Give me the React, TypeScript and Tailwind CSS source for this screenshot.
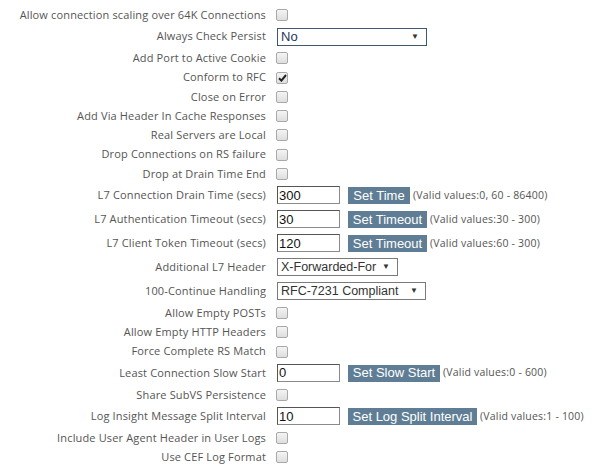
import React from 'react';

type Row =
  | { kind: 'check'; label: string; checked?: boolean }
  | { kind: 'select'; label: string; value: string; width: string; dark?: boolean }
  | { kind: 'input'; label: string; value: string; button: string; btnW: string; hint: string };

const rows: Row[] = [
  { kind: 'check', label: 'Allow connection scaling over 64K Connections' },
  { kind: 'select', label: 'Always Check Persist', value: 'No', width: 'w-[150px]', dark: true },
  { kind: 'check', label: 'Add Port to Active Cookie' },
  { kind: 'check', label: 'Conform to RFC', checked: true },
  { kind: 'check', label: 'Close on Error' },
  { kind: 'check', label: 'Add Via Header In Cache Responses' },
  { kind: 'check', label: 'Real Servers are Local' },
  { kind: 'check', label: 'Drop Connections on RS failure' },
  { kind: 'check', label: 'Drop at Drain Time End' },
  { kind: 'input', label: 'L7 Connection Drain Time (secs)', value: '300', button: 'Set Time', btnW: 'w-[62px]', hint: '(Valid values:0, 60 - 86400)' },
  { kind: 'input', label: 'L7 Authentication Timeout (secs)', value: '30', button: 'Set Timeout', btnW: 'w-[79px]', hint: '(Valid values:30 - 300)' },
  { kind: 'input', label: 'L7 Client Token Timeout (secs)', value: '120', button: 'Set Timeout', btnW: 'w-[79px]', hint: '(Valid values:60 - 300)' },
  { kind: 'select', label: 'Additional L7 Header', value: 'X-Forwarded-For', width: 'w-[121px]' },
  { kind: 'select', label: '100-Continue Handling', value: 'RFC-7231 Compliant', width: 'w-[149px]' },
  { kind: 'check', label: 'Allow Empty POSTs' },
  { kind: 'check', label: 'Allow Empty HTTP Headers' },
  { kind: 'check', label: 'Force Complete RS Match' },
  { kind: 'input', label: 'Least Connection Slow Start', value: '0', button: 'Set Slow Start', btnW: 'w-[92px]', hint: '(Valid values:0 - 600)' },
  { kind: 'check', label: 'Share SubVS Persistence' },
  { kind: 'input', label: 'Log Insight Message Split Interval', value: '10', button: 'Set Log Split Interval', btnW: 'w-[129px]', hint: '(Valid values:1 - 100)' },
  { kind: 'check', label: 'Include User Agent Header in User Logs' },
  { kind: 'check', label: 'Use CEF Log Format' },
];

const Checkbox = ({ checked }: { checked?: boolean }) => (
  <div className="ml-[10px] flex h-[12px] w-[12px] items-center justify-center rounded-[2px] border border-[#a9a9a9] bg-gradient-to-b from-[#f4f4f4] to-[#dedede]">
    {checked && (
      <svg width="9" height="8" viewBox="0 0 9 8">
        <path d="M1 4.2 L3.4 6.6 L8 1" fill="none" stroke="#222" strokeWidth="2" />
      </svg>
    )}
  </div>
);

const Select = ({ value, width, dark }: { value: string; width: string; dark?: boolean }) => (
  <div
    className={`ml-[11px] flex h-[18px] items-center justify-between border pl-[3px] pr-[7px] font-['Liberation_Sans',Arial,sans-serif] text-[12.5px] tracking-normal ${width} ${
      dark ? 'border-[#3f5872] text-[#1d3a5a] text-[13px]' : 'border-[#7a7a7a] text-[#333]'
    }`}
  >
    <span>{value}</span>
    <span className="text-[8px] text-[#333]">▼</span>
  </div>
);

export default function App() {
  return (
    <div className="w-[611px] h-[472px] bg-white pt-[5.375px] font-['Open_Sans',sans-serif] text-[11px] tracking-[0.15px] text-[#555]">
      {rows.map((r, i) => (
        <div key={i} className={`flex items-center ${r.kind === 'check' ? 'h-[19.25px]' : 'h-[24px]'}`}>
          <div className="w-[266px] shrink-0 text-right whitespace-nowrap">{r.label}</div>
          {r.kind === 'check' && <Checkbox checked={r.checked} />}
          {r.kind === 'select' && <Select value={r.value} width={r.width} dark={r.dark} />}
          {r.kind === 'input' && (
            <>
              <div className="ml-[11px] flex h-[18px] w-[63px] items-center border border-[#8a8a8a] border-t-[#555] border-l-[#555] pl-[1px] font-['Liberation_Sans',Arial,sans-serif] text-[13px] tracking-normal text-[#111]">
                {r.value}
              </div>
              <div
                className={`ml-[8px] flex h-[17px] items-center justify-center bg-[#5f7e95] font-['Liberation_Sans',Arial,sans-serif] text-[13px] tracking-normal text-white ${r.btnW}`}
              >
                {r.button}
              </div>
              <div className="ml-[3px] whitespace-nowrap text-[10.5px] tracking-[0.2px]">{r.hint}</div>
            </>
          )}
        </div>
      ))}
    </div>
  );
}
